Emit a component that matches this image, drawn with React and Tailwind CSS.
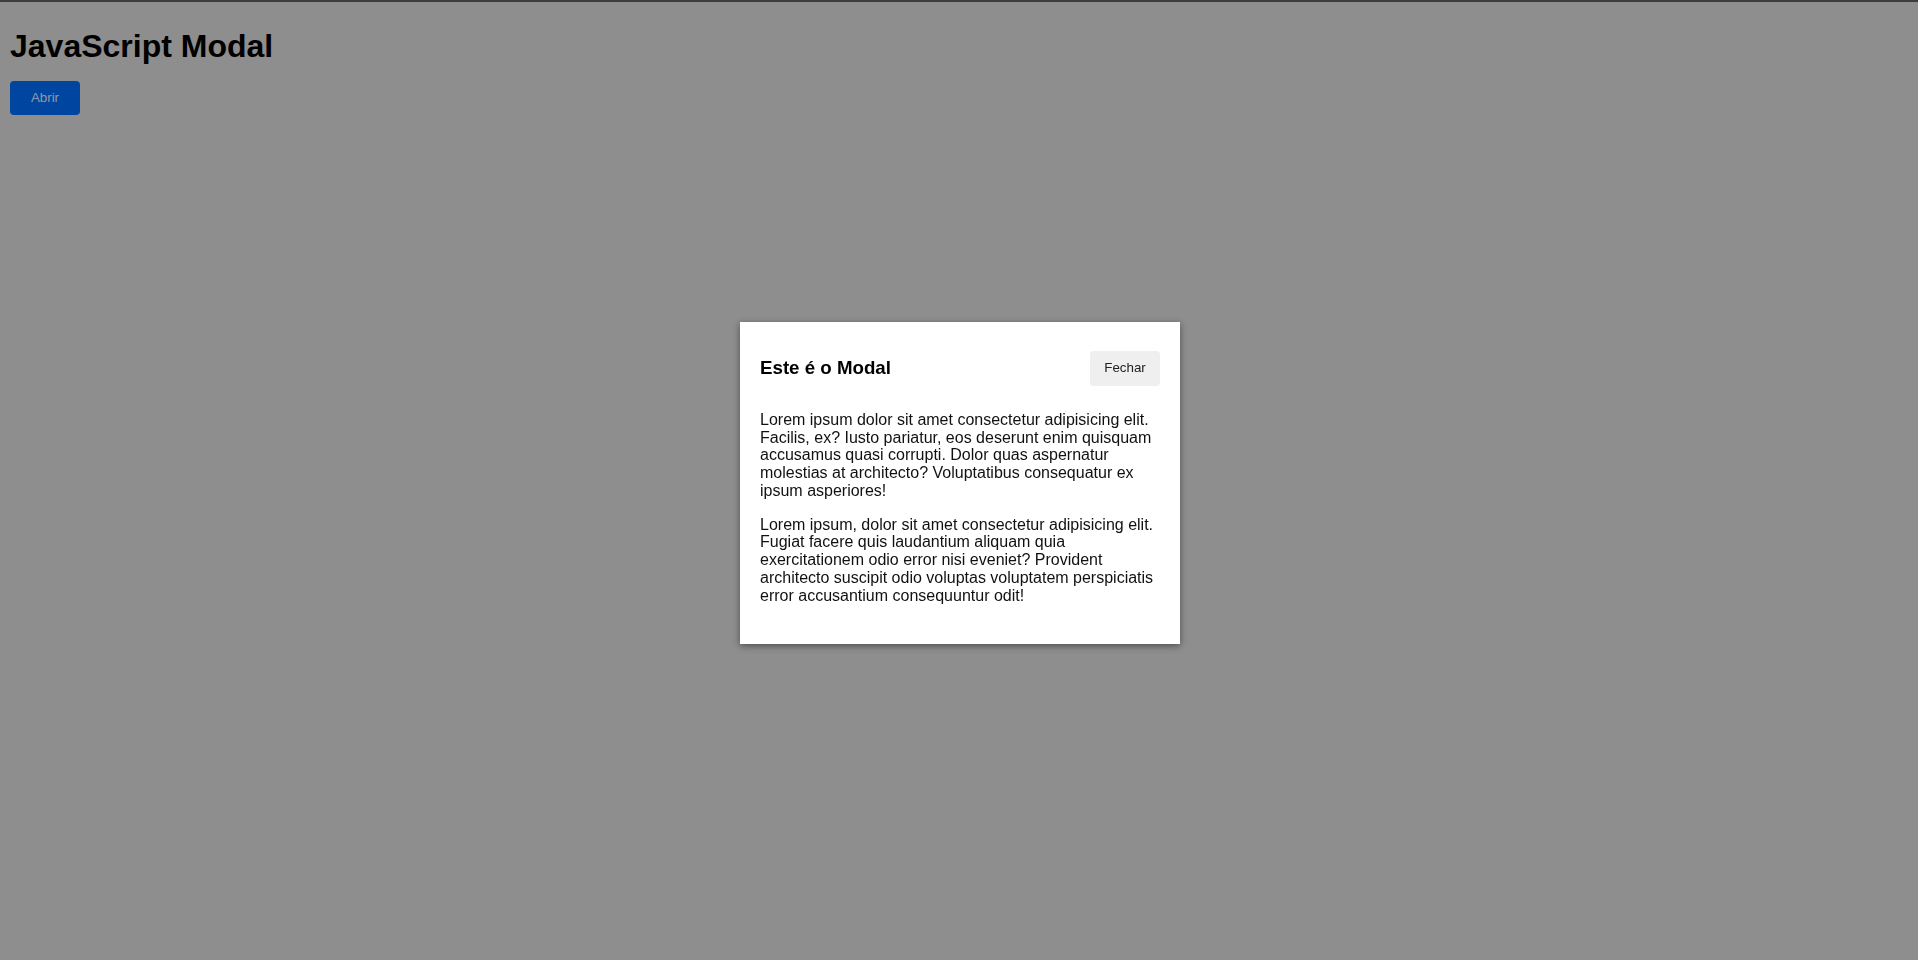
import React, { useState } from 'react';

const paragraphs = [
  'Lorem ipsum dolor sit amet consectetur adipisicing elit. Facilis, ex? Iusto pariatur, eos deserunt enim quisquam accusamus quasi corrupti. Dolor quas aspernatur molestias at architecto? Voluptatibus consequatur ex ipsum asperiores!',
  'Lorem ipsum, dolor sit amet consectetur adipisicing elit. Fugiat facere quis laudantium aliquam quia exercitationem odio error nisi eveniet? Provident architecto suscipit odio voluptas voluptatem perspiciatis error accusantium consequuntur odit!',
];

const App = () => {
  const [isOpen, setIsOpen] = useState(true);

  return (
    <div className="min-h-screen bg-[#8e8e8e] font-['Liberation_Sans',Arial,sans-serif] text-black">
      {/* top edge */}
      <div className="h-[2px] bg-[#3c3c3c]" />

      <div className="px-[10px] pt-[26px]">
        <h1 className="text-[32px] font-bold leading-[normal]">JavaScript Modal</h1>
        <button
          onClick={() => setIsOpen(true)}
          className="mt-[16px] w-[70px] h-[34px] rounded bg-[#0046a0] text-[13.33px] text-[#8e9aab] cursor-pointer"
        >
          Abrir
        </button>
      </div>

      {/* Modal */}
      {isOpen && (
        <div className="fixed inset-0 flex items-center justify-center pt-[6px] pl-[2px]">
          <div className="w-[440px] bg-white px-[20px] pt-[20px] pb-[24px] shadow-[0_2px_7px_rgba(0,0,0,0.45)]">
            <div className="h-[53px] flex items-center justify-between">
              <h2 className="text-[18.72px] font-bold leading-[normal]">Este é o Modal</h2>
              <button
                onClick={() => setIsOpen(false)}
                className="w-[70px] h-[35px] rounded bg-[#efefef] text-[13.33px] text-[#222] cursor-pointer"
              >
                Fechar
              </button>
            </div>
            <div className="pt-[16px] text-[16px] leading-[1.11] text-[#111]">
              {paragraphs.map((text, i) => (
                <p key={i} className="mb-[16px]">{text}</p>
              ))}
            </div>
          </div>
        </div>
      )}
    </div>
  );
};

export default App;
